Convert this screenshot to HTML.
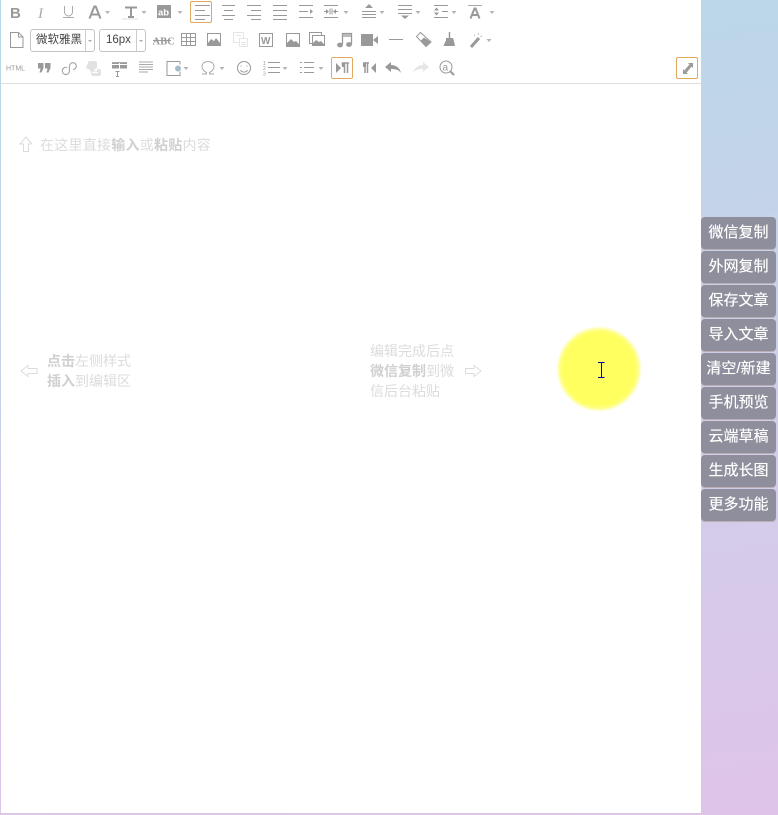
<!DOCTYPE html>
<html lang="zh">
<head>
<meta charset="utf-8">
<title>编辑器</title>
<style>
html,body{margin:0;padding:0}
body{width:778px;height:815px;overflow:hidden;position:relative;background:linear-gradient(172deg,#b6d9e8 0%,#c3d4e8 30%,#d2cdea 60%,#dfc4e8 100%);font-family:"Liberation Sans","Noto Sans CJK SC",sans-serif}
#ed{position:absolute;left:1px;top:0;width:700px;height:813px;background:#fff}
#bar{position:absolute;left:1px;top:83px;width:700px;height:1px;background:#dedede}
svg{position:absolute;left:0;top:0}
svg.ic{filter:blur(.3px)}
.sel{position:absolute;box-sizing:border-box;height:23px;top:29px;border:1px solid #c4c4c4;border-radius:3px;font-size:11.5px;color:#444;line-height:20px;background:#fff;white-space:nowrap}
.sel i{position:absolute;top:0;bottom:0;width:1px;background:#ccc}
.sel b{position:absolute;top:10px;border:2.5px solid transparent;border-top-color:#aaa;border-bottom:0}
.box{position:absolute;box-sizing:border-box;width:22px;height:22px;border:1px solid #e0a860;border-radius:2px}
.t{position:absolute;font-size:14px;line-height:20px;color:#dcdcdc;white-space:nowrap;filter:blur(.3px)}
.t b{color:#d0d0d0;font-weight:700}
.btn{position:absolute;left:701px;width:75px;height:32px;box-sizing:border-box;background:#8e8e9c;border-radius:4px;color:#fff;font-size:15px;line-height:31px;text-align:center;white-space:nowrap;box-shadow:0 1px 0 #b9aeb4;text-shadow:0 0 .5px #fff}
#glow{position:absolute;left:556px;top:326px;width:86px;height:86px;border-radius:50%;background:radial-gradient(circle closest-side,#ffff60 0%,#ffff60 84%,#ffff88 91%,#ffffd8 97%,#ffffff 100%)}
</style>
</head>
<body>
<div id="ed"></div>
<div id="bar"></div>

<div class="box" style="left:190px;top:1px"></div>
<div class="box" style="left:331px;top:57px"></div>
<div class="box" style="left:676px;top:57px"></div>

<div class="sel" style="left:30px;width:65px;padding-left:5px">微软雅黑<i style="left:54px"></i><b style="left:57px"></b></div>
<div class="sel" style="left:99px;width:47px;padding-left:6px">16px<i style="left:36px"></i><b style="left:39px"></b></div>

<svg class="ic" width="778" height="815" viewBox="0 0 778 815" fill="none" stroke="#999" stroke-width="1">
  <!-- carets -->
  <path d="M105 11h5l-2.500 3zM141.500 11h5l-2.500 3zM177.500 11h5l-2.500 3zM343.500 11h5l-2.500 3zM379.500 11h5l-2.500 3zM415.500 11h5l-2.500 3zM451.500 11h5l-2.500 3zM489.500 11h5l-2.500 3zM486.500 39h5l-2.500 3zM183.500 67h5l-2.500 3zM219.500 67h5l-2.500 3zM282.500 67h5l-2.500 3zM318.500 67h5l-2.500 3z" fill="#b4b4b4" stroke="none"/>
  <!-- row 1 -->
  <text x="10" y="18" font-family="Liberation Sans" font-weight="700" font-size="15" fill="#999" stroke="none">B</text>
  <text x="38" y="18" font-family="Liberation Serif" font-style="italic" font-size="15" fill="#aaa" stroke="none">I</text>
  <path d="M64.500 6v6a4 4 0 0 0 8 0V6M63 17.500h11" stroke="#aaa"/>
  <path d="M89.500 18.500l4.800-12h1.400l4.800 12M91.500 14.500h7" stroke-width="2"/>
  <path d="M125 7.500h12M131 7v10M128 17h6" stroke-width="2"/>
  <path d="M122 19h16" stroke="#ddd"/>
  <rect x="157" y="5" width="14" height="13" fill="#999" stroke="none"/>
  <text x="158" y="15.500" font-family="Liberation Sans" font-weight="700" font-size="9.500" fill="#fff" stroke="none">ab</text>
  <path d="M195 5.500h15M195 10.500h10M195 15.500h15M195 19.500h10"/>
  <path d="M222 5.500h13M224 10.500h9M222 15.500h13M224 19.500h9"/>
  <path d="M247 5.500h14M251 10.500h10M247 15.500h14M251 19.500h10"/>
  <path d="M273 5.500h14M273 10.500h14M273 15.500h14M273 19.500h14"/>
  <path d="M299 5.500h14M299 11.500h9M299 17.500h14"/>
  <path d="M310 9l3 2.500-3 2.500z" fill="#999" stroke="none"/>
  <path d="M324 5.500h14M324 17.500h14M324 11.500h2M336 11.500h2M330 8.500v6M332 8.500v6"/>
  <path d="M326 9l3 2.500-3 2.500zM336 9l-3 2.500 3 2.500z" fill="#999" stroke="none"/>
  <path d="M362 11.500h14M362 14.500h14M362 17.500h14"/>
  <path d="M365 8l4-4 4 4z" fill="#999" stroke="none"/>
  <path d="M398 5.500h14M398 9.500h14M398 13.500h14"/>
  <path d="M401 15.500l4 3.500 4-3.500z" fill="#999" stroke="none"/>
  <path d="M434 5.500h14M442 11.500h6M434 17.500h14"/>
  <path d="M434 10.500l2.500-3 2.500 3zM434 12.500l2.500 3 2.500-3z" fill="#999" stroke="none"/>
  <path d="M468 5.500h14" stroke="#aaa"/>
  <path d="M470.500 18.500l4-10h1l4 10M472.500 15h5" stroke-width="2"/>

  <!-- row 2 -->
  <path d="M10.500 32.500h8l4.500 4.500v10.500h-12.500zM18.500 32.500v4.500h4.500"/>
  <text x="152.500" y="44.500" font-family="Liberation Serif" font-weight="700" font-size="10.500" fill="#999" stroke="none">ABC</text>
  <path d="M153 40.500h18"/>
  <path d="M181.500 33.500h14v12h-14zM181.500 37.500h14M181.500 41.500h14M186.500 33.500v12M190.500 33.500v12"/>
  <rect x="207.500" y="33.500" width="13" height="12"/>
  <path d="M208 45v-2l3-4 3 2 2-3 4 5v2z" fill="#999" stroke="none"/>
  <g stroke="#e6e6e6">
    <rect x="233.500" y="32.500" width="10" height="10"/>
    <rect x="239.500" y="38.500" width="8" height="8" fill="#fff"/>
    <path d="M241 42.500h5M241 44.500h5M236 35.500h5"/>
  </g>
  <rect x="259.500" y="33.500" width="13" height="13"/>
  <text x="261" y="44" font-family="Liberation Sans" font-weight="700" font-size="10" fill="#999" stroke="none">W</text>
  <rect x="286.500" y="33.500" width="13" height="13"/>
  <path d="M287 46v-3l4-4 3 3 2-1 3 3v2z" fill="#999" stroke="none"/>
  <path d="M309.500 35.500v-3h12v3M309.500 32.500v11h3"/>
  <rect x="312.500" y="35.500" width="12" height="10"/>
  <path d="M313 45v-2l3-3 3 2 2-1 3 3v1z" fill="#999" stroke="none"/>
  <path d="M342.500 44V33.500h9V44" stroke-width="1.300"/>
  <path d="M343 35.500h8" stroke-width="3" stroke="#bbb"/>
  <ellipse cx="340" cy="45" rx="2.900" ry="2.400" fill="#999" stroke="none"/>
  <ellipse cx="349" cy="44.500" rx="2.900" ry="2.400" fill="#999" stroke="none"/>
  <rect x="361" y="34" width="12" height="12" fill="#999" stroke="none"/>
  <path d="M373 40l5-4v8z" fill="#999" stroke="none"/>
  <path d="M389 39.500h14"/>
  <path d="M420.500 32.500l-4 4 9.500 10 5-4.500z" fill="#fff"/>
  <path d="M424 37.500l-3.500 3.500 5.500 5.500 5-4.500z" fill="#999" stroke="none"/>
  <path d="M449.500 32v6" stroke-width="1.500"/>
  <path d="M446 38h7l1 3h-8zM445.500 41h8.500l1 5h-11.500z" fill="#999" stroke="none"/>
  <path d="M471 47l8-9" stroke-width="3"/>
  <path d="M478 33l.8 1.800M482 36l-1.500.6M474 35l1 1" stroke="#bbb"/>

  <!-- row 3 -->
  <text x="6" y="70.500" font-family="Liberation Sans" font-size="7" fill="#999" stroke="none">HTML</text>
  <path d="M38 63h5.500v5l-2 4.500h-2l1-4h-2.500zM45 63h5.500v5l-2 4.500h-2l1-4H45z" fill="#999" stroke="none"/>
  <path d="M67 67.500a3.600 3.600 0 1 0 2.500 3.500c0-3-.5-2 0-5a3.400 3.400 0 1 1 3.500 3.500" stroke="#aaa" stroke-width="1.200"/>
  <path d="M88 63a2 2 0 0 1 2-2h5a2 2 0 0 1 2 2v4a2 2 0 0 1-2 2h-1l2 2h1v-2h2a2 2 0 0 1 2 2v3a2 2 0 0 1-2 2h-6a2 2 0 0 1-2-2v-2l-2-3h-1a2 2 0 0 1-2-2z" fill="#e2e2e2" stroke="none"/>
  <path d="M92 72.500h6M95 70v3" stroke="#fff"/>
  <rect x="112" y="62" width="15" height="6.500" fill="#999" stroke="none"/>
  <path d="M119.500 62v7M112 64.500h15" stroke="#fff"/>
  <path d="M112 62.500h15" stroke="#aaa"/>
  <path d="M115.500 71.500h4M117.500 71.500v4.500M116 76.500h3"/>
  <path d="M139 62h14M139 64.500h14M139 67h14M139 69.500h14M139 72h9" stroke="#aaa"/>
  <path d="M180 61.500h-13v14h13v-4M180 61.500v3"/>
  <circle cx="178" cy="68.500" r="3" fill="#a6bccb" stroke="none"/>
  <path d="M202 74h4.500v-1.500c-2.500-1-4.500-3.500-4.500-6 0-3 2.500-5 6-5s6 2 6 5c0 2.500-2 5-4.500 6V74h4.500" stroke="#aaa"/>
  <circle cx="244" cy="68" r="6.500"/>
  <path d="M241 66.500v-1M247 66.500v-1M240.500 70a4 4 0 0 0 7 0"/>
  <text x="263" y="65" font-family="Liberation Sans" font-size="5" fill="#999" stroke="none">1</text>
  <text x="263" y="70" font-family="Liberation Sans" font-size="5" fill="#999" stroke="none">2</text>
  <text x="263" y="75.500" font-family="Liberation Sans" font-size="5" fill="#999" stroke="none">3</text>
  <path d="M268 62.500h12M268 67.500h12M268 72.500h12"/>
  <path d="M300 62.500h2M300 67.500h2M300 72.500h2M304 62.500h10M304 67.500h10M304 72.500h10"/>
  <path d="M336 63l5 5-5 5z" fill="#999" stroke="none"/>
  <path d="M342 63h7M344.500 63v10M347.500 63v10" stroke-width="1.500"/>
  <path d="M341.500 63h3v4h-2.500z" fill="#999" stroke="none"/>
  <path d="M363 63h6M365 63v10M367.500 63v10" stroke-width="1.500"/>
  <path d="M363 63h3v4h-3z" fill="#999" stroke="none"/>
  <path d="M376 63l-5 5 5 5z" fill="#999" stroke="none"/>
  <path d="M385 67l6-5v3c5 0 9 3 10 8-2-3-5-4-10-4v3z" fill="#999" stroke="none"/>
  <path d="M429 67l-6-5v3c-5 0-9 3-10 8 2-3 5-4 10-4v3z" fill="#e6e6e6" stroke="none"/>
  <circle cx="446" cy="67" r="6"/>
  <path d="M450.500 71.500l3.500 3.500" stroke-width="2"/>
  <text x="442.500" y="70.500" font-family="Liberation Sans" font-size="10" fill="#999" stroke="none">a</text>
  <path d="M683 74v-5l5 5zM693 63v5l-5-5z" fill="#999" stroke="none"/>
  <path d="M685.500 71.500l5-6" stroke-width="3"/>

  <!-- hint arrows -->
  <g stroke="#dcdcdc">
    <path d="M26 137l-6 7h3.500v7.500h5V144h3.500z"/>
    <path d="M21 371l7-5.500v3h9v5h-9v3z"/>
    <path d="M481 371l-7-5.500v3h-8.500v5h8.500v3z"/>
  </g>
</svg>

<div class="t" style="left:40px;top:135px;letter-spacing:.25px">在这里直接<b>输入</b>或<b>粘贴</b>内容</div>
<div class="t" style="left:47px;top:351px"><b>点击</b>左侧样式<br><b>插入</b>到编辑区</div>
<div class="t" style="left:370px;top:341px">编辑完成后点<br><b>微信复制</b>到微<br>信后台粘贴</div>

<div class="btn" style="top:217px">微信复制</div>
<div class="btn" style="top:251px">外网复制</div>
<div class="btn" style="top:285px">保存文章</div>
<div class="btn" style="top:319px">导入文章</div>
<div class="btn" style="top:353px">清空/新建</div>
<div class="btn" style="top:387px">手机预览</div>
<div class="btn" style="top:421px">云端草稿</div>
<div class="btn" style="top:455px">生成长图</div>
<div class="btn" style="top:489px">更多功能</div>

<div id="glow"></div>
<svg width="778" height="815" viewBox="0 0 778 815" fill="none" stroke="#00009a" stroke-width="1">
  <path d="M598 362.500h6.500M601.500 363v14M598 377.500h6.500"/>
</svg>
</body>
</html>
